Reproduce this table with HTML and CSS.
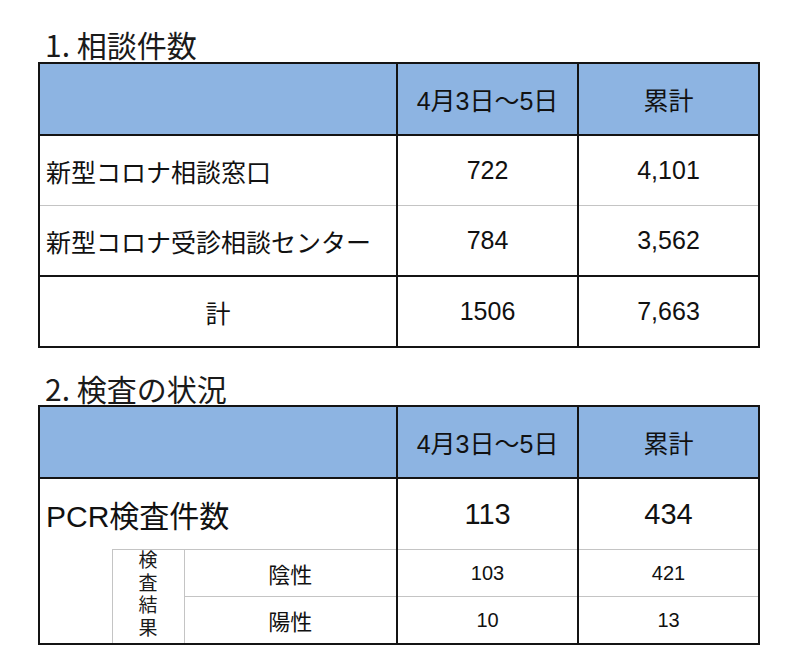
FILE: index.html
```html
<!DOCTYPE html>
<html lang="ja">
<head>
<meta charset="utf-8">
<title>相談件数・検査の状況</title>
<link rel="stylesheet" href="styles.css">
</head>
<body>
<div class="page">
  <h2 class="title title-first">1. 相談件数</h2>
  <table class="tbl">
    <colgroup>
      <col class="c-label">
      <col class="c-num">
      <col class="c-num">
    </colgroup>
    <tr class="head">
      <th></th>
      <th>4月3日～5日</th>
      <th>累計</th>
    </tr>
    <tr class="row row-thin">
      <td class="label">新型コロナ相談窓口</td>
      <td class="num">722</td>
      <td class="num">4,101</td>
    </tr>
    <tr class="row">
      <td class="label">新型コロナ受診相談センター</td>
      <td class="num">784</td>
      <td class="num">3,562</td>
    </tr>
    <tr class="row row-total">
      <td class="label-c">計</td>
      <td class="num">1506</td>
      <td class="num">7,663</td>
    </tr>
  </table>

  <h2 class="title title-second">2. 検査の状況</h2>
  <table class="tbl">
    <colgroup>
      <col class="c-blank">
      <col class="c-vert">
      <col class="c-kind">
      <col class="c-num">
      <col class="c-num">
    </colgroup>
    <tr class="head">
      <th colspan="3"></th>
      <th>4月3日～5日</th>
      <th>累計</th>
    </tr>
    <tr class="row pcr">
      <td colspan="3" class="label big">PCR検査件数</td>
      <td class="num big-num">113</td>
      <td class="num big-num">434</td>
    </tr>
    <tr class="sub sub-first">
      <td rowspan="2" class="blank"></td>
      <td rowspan="2" class="vert"><div class="vtext">検査結果</div></td>
      <td class="kind">陰性</td>
      <td class="small-num">103</td>
      <td class="small-num">421</td>
    </tr>
    <tr class="sub sub-second">
      <td class="kind">陽性</td>
      <td class="small-num">10</td>
      <td class="small-num">13</td>
    </tr>
  </table>
</div>
</body>
</html>
```

FILE: styles.css
```css
html, body {
  margin: 0;
  padding: 0;
  background: #ffffff;
}

.page {
  padding-left: 38px;
  font-family: "Liberation Sans", "Noto Sans CJK JP", sans-serif;
  color: #111111;
}

.title {
  margin: 0 0 3px 7px;
  font-family: "Noto Sans CJK JP", sans-serif;
  font-weight: 400;
  font-size: 30px;
  line-height: 29px;
  height: 29px;
  color: #1a1a1a;
}

.title-first {
  padding-top: 30px;
}

.title-second {
  margin-top: 26px;
  margin-bottom: 2px;
}

.tbl {
  border-collapse: collapse;
  table-layout: fixed;
  width: 721px;
  border: 2px solid #141414;
}

.c-label { width: 358px; }
.c-num { width: 181px; }
.c-blank { width: 73px; }
.c-vert { width: 72px; }
.c-kind { width: 213px; }

.tbl th,
.tbl td {
  padding: 0;
  text-align: center;
  vertical-align: middle;
  border-left: 2px solid #141414;
  border-right: 2px solid #141414;
  font-weight: 400;
}

.head th {
  height: 70px;
  background: #8db4e2;
  border-bottom: 2px solid #141414;
  font-size: 25px;
}

.row td {
  height: 69px;
  font-size: 25px;
}

.row-thin td {
  border-bottom: 1px solid #c4c4c4;
}

.row-total td {
  border-top: 2px solid #141414;
}

.label {
  text-align: left !important;
  padding-left: 6px !important;
  font-family: "Noto Sans CJK JP", sans-serif;
  white-space: nowrap;
}

.label-c {
  font-family: "Noto Sans CJK JP", sans-serif;
}

.num {
  font-size: 24px;
}

.pcr td {
  height: 70px;
}

.big {
  font-family: "Liberation Sans", "Noto Sans CJK JP", sans-serif;
  font-size: 30px !important;
}

.big-num {
  font-size: 29px !important;
}

.sub td {
  height: 46px;
  font-size: 20px;
}

.sub-first td {
  border-top: 1px solid #c4c4c4;
}

.sub-first .blank {
  border-top: none;
  border-right: 1px solid #c4c4c4;
}

.vert {
  border-left: 1px solid #c4c4c4 !important;
  border-right: 1px solid #c4c4c4 !important;
  vertical-align: top !important;
}

.vtext {
  width: 20px;
  margin: -2px auto 0;
  font-family: "Noto Sans CJK JP", sans-serif;
  font-size: 19px;
  line-height: 22.5px;
  color: #1a1a1a;
}

.kind {
  border-left: 1px solid #c4c4c4 !important;
  font-family: "Noto Sans CJK JP", sans-serif;
  font-size: 22px !important;
}

.sub-second td {
  border-top: 1px solid #c4c4c4;
}

.small-num {
  font-size: 20px;
}
```
